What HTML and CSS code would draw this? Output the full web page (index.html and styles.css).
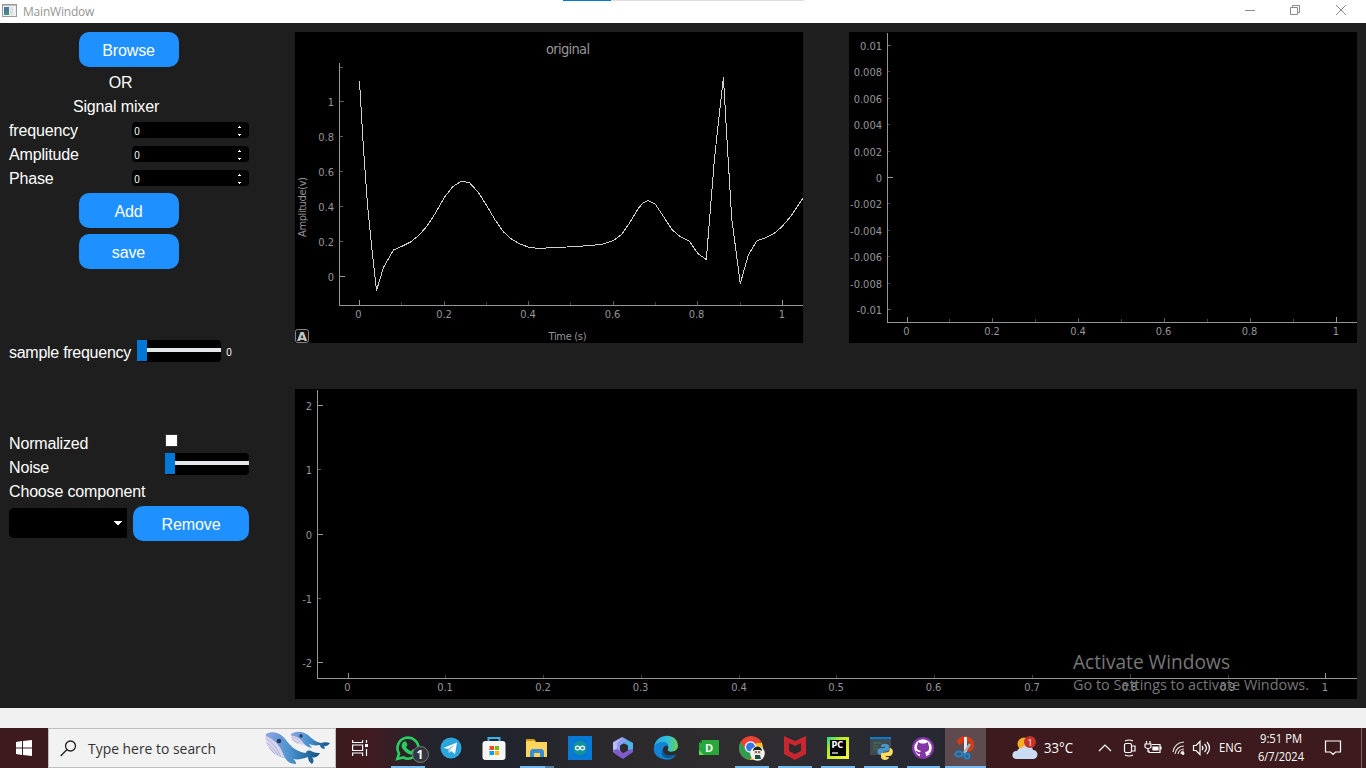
FILE: index.html
```html
<!DOCTYPE html>
<html lang="en">
<head>
<meta charset="utf-8">
<title>MainWindow</title>
<link rel="stylesheet" href="styles.css">
</head>
<body>
<header class="titlebar">
  <svg class="app-icon" width="15" height="13" viewBox="0 0 15 13"><rect x=".5" y=".5" width="14" height="12" fill="#eef0f1" stroke="#989b9e"/><path d="M1 1h13v1H1z" fill="#b9c0c8"/><path d="M2 3h5v8H2z" fill="#3f8f82"/><path d="M2 3h5v3L2 9z" fill="#4c79a0"/><path d="M8 3h3v8H8z" fill="#dedfe0"/></svg>
  <span class="title">MainWindow</span>
  <div class="progress"><i></i></div>
  <svg class="window-buttons" width="104" height="12" viewBox="1244 4 104 12" fill="none" stroke="#8b8b8b"><path d="M1245 10.500h10M1290.500 7.500h7v7h-7zM1292.500 7V5.500h7v7H1298"/><path d="M1336 5l10 10M1346 5l-10 10"/></svg>
</header>

<main class="window">
  <section class="controls">
    <button class="button">Browse</button>
    <div class="label label-or">OR</div>
    <div class="label label-mixer">Signal mixer</div>
    <div class="row"><span class="label">frequency</span><div class="spin"><span class="digit">0</span><svg width="5" height="12" viewBox="0 0 5 12" fill="#fff"><path d="M2 1h1v1h1v1H1V2h1zM1 9h3v1H3v1H2v-1H1z"/></svg></div></div>
    <div class="row"><span class="label">Amplitude</span><div class="spin"><span class="digit">0</span><svg width="5" height="12" viewBox="0 0 5 12" fill="#fff"><path d="M2 1h1v1h1v1H1V2h1zM1 9h3v1H3v1H2v-1H1z"/></svg></div></div>
    <div class="row"><span class="label">Phase</span><div class="spin"><span class="digit">0</span><svg width="5" height="12" viewBox="0 0 5 12" fill="#fff"><path d="M2 1h1v1h1v1H1V2h1zM1 9h3v1H3v1H2v-1H1z"/></svg></div></div>
    <button class="button">Add</button>
    <button class="button">save</button>
    <div class="sample"><span class="label">sample frequency</span><div class="slider"><i></i></div><span class="value digit">0</span></div>
    <div class="row"><span class="label">Normalized</span><i class="check"></i></div>
    <div class="row"><span class="label">Noise</span><div class="slider noise"><i></i></div></div>
    <div class="label">Choose component</div>
    <div class="component"><div class="combo"><svg width="8" height="4" viewBox="0 0 8 4"><path d="M0 0h8v1H7v1H6v1H5v1H3V3H2V2H1V1H0z" fill="#fff"/></svg></div><button class="button remove">Remove</button></div>
  </section>

  <section class="plots">
    <svg class="plot" width="508" height="311" viewBox="295 32 508 311">
      <path class="axis" d="M339.500 63v242.500H803M339.500 276.500h5M359.500 305v-5M782.500 305v-5"/>
      <path class="tick" d="M340 101.500h4M340 136.500h3M340 171.500h3M340 206.500h3M340 241.500h3M340 67.500h3M444.500 305v-4M528.500 305v-4M613.500 305v-4M697.500 305v-4"/>
      <path class="minor" d="M401.500 305v-3M486.500 305v-3M570.500 305v-3M655.500 305v-3M740.500 305v-3"/>
      <polyline class="curve" points="359.500,81 363.300,146 367.500,205 372,250 376.500,290.500 383.500,267.500 393.500,250 401.500,246.500 410,242.300 418.300,236 427.300,225.700 435.300,213.300 444,198 452.300,187 461,181.300 469.300,182.500 478.300,192.300 486.700,205.700 495,219.700 503.300,231.700 511.700,239.300 520,244 528.300,247 537.300,248.400 546,248 566.700,247 583.300,246 595,245 603.300,244 613.300,240.700 621.700,234.300 630,222.300 638.300,208.300 642.500,203.500 647.700,200.500 655.300,204.300 664,217.300 672.300,230 680.700,237 689.300,241 697.700,253.300 706.300,259.700 714.500,158.300 723.400,77 727.300,145 731.700,218.300 740.300,283.700 748.300,255 757,240.700 766,237.700 774.300,233.300 782.300,226.300 791,216 803,198"/>
      <g class="num end"><text x="334" y="106">1</text><text x="334" y="141">0.8</text><text x="334" y="176">0.6</text><text x="334" y="211">0.4</text><text x="334" y="246">0.2</text><text x="334" y="281">0</text></g>
      <g class="num mid"><text x="358.500" y="318">0</text><text x="444" y="318">0.2</text><text x="528" y="318">0.4</text><text x="612.500" y="318">0.6</text><text x="696.500" y="318">0.8</text><text x="782" y="318">1</text><text x="567.500" y="340" textLength="38">Time (s)</text><text transform="translate(306 207) rotate(-90)" textLength="60">Amplitude(v)</text></g>
      <text class="plot-title" x="546" y="54" textLength="44">original</text>
      <rect x="295.500" y="329.500" width="13" height="13" rx="2" fill="#111" stroke="#858585"/><text class="auto" x="302" y="341">A</text>
    </svg>
    <svg class="plot" width="508" height="311" viewBox="849 32 508 311">
      <path class="axis" d="M887.500 33v289.500H1357M888 177.500h5M907.500 322v-5M1336.500 322v-5"/>
      <path class="tick" d="M888 45.500h3M888 309.500h3M992.500 322v-4M1078.500 322v-4M1164.500 322v-4M1250.500 322v-4"/>
      <path class="minor" d="M888 71.500h2M888 98.500h2M888 124.500h2M888 151.500h2M888 203.500h2M888 230.500h2M888 256.500h2M888 283.500h2M949.500 322v-3M1035.500 322v-3M1121.500 322v-3M1207.500 322v-3M1293.500 322v-3"/>
      <g class="num end"><text x="882" y="50">0.01</text><text x="882" y="76">0.008</text><text x="882" y="103">0.006</text><text x="882" y="129">0.004</text><text x="882" y="156">0.002</text><text x="882" y="182">0</text><text x="882" y="208">-0.002</text><text x="882" y="235">-0.004</text><text x="882" y="261">-0.006</text><text x="882" y="288">-0.008</text><text x="882" y="314">-0.01</text></g>
      <g class="num mid"><text x="906.500" y="335">0</text><text x="992" y="335">0.2</text><text x="1078" y="335">0.4</text><text x="1163.500" y="335">0.6</text><text x="1249.500" y="335">0.8</text><text x="1336" y="335">1</text></g>
    </svg>
    <svg class="plot wide" width="1062" height="310" viewBox="295 389 1062 310">
      <path class="axis" d="M317.500 390v288.500H1357M318 405.500h5M318 534.500h5M318 662.500h5M348.500 678v-5M1325.500 678v-5"/>
      <path class="tick" d="M318 469.500h3M318 598.500h3"/>
      <path class="minor" d="M445.500 678v-3M543.500 678v-3M641.500 678v-3M739.500 678v-3M836.500 678v-3M934.500 678v-3M1032.500 678v-3M1130.500 678v-4M1228.500 678v-3"/>
      <g class="num end"><text x="312" y="410">2</text><text x="312" y="474">1</text><text x="312" y="539">0</text><text x="312" y="603">-1</text><text x="312" y="667">-2</text></g>
      <g class="num mid"><text x="347.500" y="691">0</text><text x="445" y="691">0.1</text><text x="543" y="691">0.2</text><text x="640.500" y="691">0.3</text><text x="739" y="691">0.4</text><text x="836" y="691">0.5</text><text x="933.500" y="691">0.6</text><text x="1032" y="691">0.7</text><text x="1129.500" y="691">0.8</text><text x="1227.500" y="691">0.9</text><text x="1325" y="691">1</text></g>
    </svg>
  </section>
</main>
<div class="statusbar"></div>

<footer class="taskbar">
  <div class="start"><svg width="16" height="16" viewBox="0 0 16 16" fill="#fff"><path d="M0 2l6-.9v6.500H0zM7 1l9-1v7.600H7zM0 8.500h6V15l-6-.9zM7 8.500h9V16l-9-1z"/></svg></div>
  <div class="search">
    <svg width="17" height="17" viewBox="0 0 17 17" fill="none" stroke="#222" stroke-width="1.300"><circle cx="10.500" cy="6" r="5"/><path d="M7 9.500L.7 16"/></svg>
    <svg class="search-text" width="132" height="26" viewBox="0 0 132 26"><text x="0" y="19" textLength="128" lengthAdjust="spacingAndGlyphs">Type here to search</text></svg>
    <svg class="whales" width="65" height="34" viewBox="0 0 65 34">
      <defs><linearGradient id="whale"><stop stop-color="#8fa3df"/><stop offset=".45" stop-color="#4a92cd"/><stop offset="1" stop-color="#0e5083"/></linearGradient></defs>
      <path d="M1 3c7-4 15-1 20 6 5 7 11 12 20 13 0-2 2-3 5-2 4 2 6 2 9 2-3 5-6 5-8 4 2 3 2 5 0 7-3-2-4-4-4-7-6 2-10 3-15 2 3 2 3 4 3 5-6 0-9-3-11-6C9 25-1 15 1 3z" fill="url(#whale)"/>
      <path d="M1 5c5 2 9 5 13 10 3 4 4 8 6 12C9 25-1 15 1 5z" fill="#d9d3ed"/><path d="M2 8c5 3 9 8 14 18M2 12c4 3 7 7 11 12M4 17c2 2 4 4 6 6" stroke="#9bacd0" stroke-width=".7" fill="none"/>
      <circle cx="14" cy="10" r="2.300" fill="#263b66"/>
      <path d="M26 3c6-4 13-2 17 1 4 4 8 7 13 8 2-1 5-1 9 0-2 3-4 3-6 3 1 2 1 3 0 3-3-1-4-2-4-4-5 1-8 0-11-1l3 4c-4-1-6-2-8-4-7 1-13-4-13-10z" fill="url(#whale)"/><path d="M26 5c5-1 10 3 13 8-7 1-13-2-13-8z" fill="#d9d3ed"/><path d="M28 6c3 1 6 3 8 6M27 8c2 1 4 3 6 4" stroke="#9bacd0" stroke-width=".6" fill="none"/><circle cx="36" cy="5" r="1.700" fill="#263b66"/>
    </svg>
  </div>
  <div class="taskview"><svg width="17" height="16" viewBox="0 0 17 16" fill="none" stroke="#fff" stroke-width="1.200"><path d="M.6 0v2.500h10V0M.6 16v-3h10v3M.6 5h10v5.500H.6zM14.500 0v3M14.500 9v7"/><path d="M13 4h3v3h-3z" fill="#fff" stroke="none"/></svg></div>
  <nav class="apps">
    <div class="app run"><svg class="whatsapp" width="34" height="30" viewBox="0 0 34 30"><path d="M2.300 25l1.700-5.500A10.500 10.500 0 1 1 8.300 23.500z" fill="none" stroke="#25cf62" stroke-width="2.600"/><path d="M8.500 8c2-2 3 0 4 3L11 13c1 2 3 3.500 5 4.300l1.800-2c2 .8 3.700 1.500 3 3-2 4-7 3-11-1S5.800 10.300 8.500 8z" fill="#25cf62"/><circle cx="25.500" cy="20.500" r="8" fill="#333840" stroke="#777b80"/><text class="badge" x="25" y="24.500">1</text></svg></div>
    <div class="app"><svg width="24" height="24" viewBox="0 0 24 24"><circle cx="12" cy="12" r="10.500" fill="#2ba5de"/><path d="M4.500 12L18 6.500 16 18l-4-3-2 2-.5-4z" fill="#fff"/><path d="M9 13l7-5-5 6-1 3z" fill="#9cc4dc"/></svg></div>
    <div class="app"><svg width="24" height="24" viewBox="0 0 24 24"><path d="M6.500 6V2h11v4" fill="none" stroke="#36b3e9" stroke-width="2"/><rect x=".5" y="5" width="23" height="19" rx="3" fill="#f5f5f5"/><path d="M7.500 10H12v4H7.500z" fill="#ed4b25"/><path d="M12.800 10H17v4h-4.200z" fill="#78b817"/><path d="M7.500 15H12v4H7.500z" fill="#00a2ed"/><path d="M12.800 15H17v4h-4.200z" fill="#fbb605"/></svg></div>
    <div class="app run explorer"><svg width="24" height="24" viewBox="0 0 24 24"><path d="M1 3h8l2 2H1z" fill="#d79900"/><path d="M1 5h9l1 1h11v15H1z" fill="#fdd45c"/><path d="M5 21v-6l2-2h10l2 2v6h-4v-4H9v4z" fill="#388ed6"/></svg></div>
    <div class="app"><svg width="24" height="24" viewBox="0 0 24 24"><path d="M0 0h24v24H0z" fill="#0878d5"/><circle cx="12" cy="12" r="7" fill="#11959b"/><path d="M12 12c-1.500-3-4.500-2-4.500 0s3 3 4.500 0 4.500-2 4.500 0-3 3-4.500 0z" fill="none" stroke="#fff" stroke-width="1.300"/></svg></div>
    <div class="app"><svg width="24" height="24" viewBox="0 0 24 24"><path d="M11 1L2 6v10l5 3 3-3V9l5-3V3z" fill="#8d9cf3"/><path d="M11 1l4 2v3l-5 3 4-1 3 2v6l5-2V7z" fill="#4bb5e7"/><path d="M22 13v3l-10 7-8-5-2-4 4-1 6 4 5-3z" fill="#7f5cce"/><path d="M9 9.500l4-2 4 2v5l-4 2-4-2z" fill="#2e2b2e"/><path d="M2 14V7l9-5-5 5v6z" fill="#c0baf6"/></svg></div>
    <div class="app"><svg width="26" height="26" viewBox="0 0 26 26"><defs><linearGradient id="edge"><stop stop-color="#2aa9dc"/><stop offset=".55" stop-color="#30bddd"/><stop offset="1" stop-color="#67d553"/></linearGradient></defs><path d="M1 13C2-3 25-3 25 11c0 7-12 7-10 3 2-9-10-7-14-1z" fill="url(#edge)"/><path d="M1 12c3-6 14-7 14-1-2-1-5 0-5 4 0 4 5 8 13 5-3 4-8 6-13 4C3 22 0 18 1 12z" fill="#1383d3"/><path d="M10 13c-2 6 5 9 13 6-6 8-18 4-13-6z" fill="#075795"/></svg></div>
    <div class="app"><svg width="20" height="16" viewBox="0 0 20 16"><path d="M3 0h17v15H0V3z" fill="#27a83a"/><path d="M3 0v3H0z" fill="#176e27"/><path d="M0 10l5 5H0z" fill="#69d85b"/><text class="d-letter" x="10" y="12">D</text></svg></div>
    <div class="app run"><svg width="26" height="26" viewBox="0 0 26 26"><circle cx="12" cy="13" r="12" fill="#ea4335"/><path d="M1.600 7A12 12 0 0 0 11 25l6-10H7z" fill="#2f9e50"/><path d="M24 13a12 12 0 0 1-13 12l6-9V8h6z" fill="#fcc31c"/><circle cx="11.500" cy="12" r="5.800" fill="#fff"/><circle cx="11.500" cy="12" r="4.500" fill="#3978df"/><circle cx="18.500" cy="18.500" r="7.300" fill="#f2f2f0"/><path d="M14 16c0-6 9-6 9 0l-2-1h-5z" fill="#162520"/><path d="M15 16h7v3h-7z" fill="#efcbb5"/><path d="M17 16v2M20 16v2" stroke="#222"/><path d="M16 20h5l1 4h-6z" fill="#1e5146"/></svg></div>
    <div class="app run"><svg width="24" height="24" viewBox="0 0 24 24"><path d="M1 0l11 5 11-5v18l-11 6-11-6zM6 7v8l6 3 6-3V7l-6 3z" fill="#c8282d" fill-rule="evenodd"/></svg></div>
    <div class="app run"><svg width="22" height="22" viewBox="0 0 22 22"><defs><linearGradient id="pc" x2="1" y2="1"><stop stop-color="#20d889"/><stop offset=".35" stop-color="#b6ec20"/><stop offset="1" stop-color="#faf34d"/></linearGradient></defs><path d="M0 0h22v22H0z" fill="url(#pc)"/><path d="M3 3h16v16H3z"/><text class="pc-letters" x="4.500" y="11">PC</text><path d="M5 16h6" stroke="#fff" stroke-width="1.200"/></svg></div>
    <div class="app run"><svg width="24" height="24" viewBox="0 0 24 24"><path d="M1 1h21v18H1z" fill="#414850"/><path d="M1 1h21v2H1z" fill="#087bd0"/><path d="M4 7h9M4 10h5M4 13h5" stroke="#3c7c4d"/><path d="M12 10c0-3 8-3 8 0v4c0 2-5 1-6 2l-1 3c-6 1-6-7-1-7h4v-1h-4z" fill="#4795cb"/><path d="M20.500 12c5 0 4 8 0 8H17v1h3c0 4-8 4-8 0v-3c0-2 5-1 7-2 2 0 1.500-3 1.500-4z" fill="#ffdc5b"/></svg></div>
    <div class="app run github"><svg width="24" height="24" viewBox="0 0 24 24"><circle cx="12" cy="12" r="11" fill="#8435a7"/><circle cx="12" cy="12" r="8.700" fill="#fff"/><path d="M7 6l3 1.500h4L17 6l.5 3c2 5-1 7-3.500 7 1 1 1 3 1 5H9v-3c-3 1-3-2-5-3 3-1 2 2 5 1l1-1c-4-1-5-3-3.500-6z" fill="#8435a7"/></svg></div>
    <div class="app run active"><svg width="24" height="24" viewBox="0 0 24 24"><path d="M3 5c3-7 15-6 17 2 1 6-3 9-7 9v-3c4 0 5-5 2-7-4-2-6 0-9 3-2-1-3-2-3-4z" fill="#d83b12"/><path d="M10 1h3v15h-3z" fill="#e4eaf0"/><path d="M16 8l-6 9" stroke="#aab1b6" stroke-width="2.500"/><g fill="none" stroke="#1687d8" stroke-width="2"><ellipse cx="5" cy="18" rx="3.500" ry="2.500"/><circle cx="13" cy="20" r="2.500"/></g></svg></div>
  </nav>
  <div class="tray">
    <svg width="380" height="40" viewBox="986 728 380 40">
      <circle cx="1024" cy="744" r="6.500" fill="#f7ae24"/><path d="M1016 759h17a4.500 4.500 0 0 0 0-9 6 6 0 0 0-11-2 5 5 0 0 0-5 3 4 4 0 0 0-1 8z" fill="#c9dcf4"/><circle cx="1030" cy="742" r="6" fill="#c93226"/><text class="alert" x="1030" y="745.500">1</text>
      <g class="tray-text"><text x="1044" y="753" font-size="14" textLength="29" lengthAdjust="spacingAndGlyphs">33°C</text><text x="1219" y="752" textLength="23" lengthAdjust="spacingAndGlyphs">ENG</text><text x="1260" y="743" textLength="42" lengthAdjust="spacingAndGlyphs">9:51 PM</text><text x="1258" y="761" textLength="46" lengthAdjust="spacingAndGlyphs">6/7/2024</text></g>
      <g fill="none" stroke="#fff" stroke-width="1.200"><path d="M1099 751l6-6 6 6M1325.500 741v11h5l2.500 2.500 2.500-2.500h5v-11z"/><rect x="1124.500" y="743.500" width="7" height="9" rx="1.500"/><path d="M1132 746h3v5h-3M1125 741q4-2 8 0M1125 755q4 2 8 0"/><path d="M1152 744.500h8v8h-11v-2M1161 746.500v3M1146.500 741v3M1150 741v3M1145 744h6v3c-1 2-5 2-6 0zM1148 749v3"/><path d="M1153 747h5v3h-5z" fill="#fff"/><path d="M1193.500 745.500h2.500l4-4v13l-4-4h-2.500zM1202 746q2 2 0 4M1204.500 744q4 4 0 8M1207 742q5 6 0 12"/><path d="M1173 752a11 11 0 0 1 11-10M1175 754a9 9 0 0 1 9-8M1178 754a6 6 0 0 1 6-5M1181 754a3 3 0 0 1 3-3" opacity=".85"/></g><circle cx="1183" cy="753.500" r="1.400" fill="#fff"/><path d="M1361.500 728v40" stroke="#806568"/>
    </svg>
  </div>
</footer>
<svg class="watermark" width="250" height="54" viewBox="1070 646 250 54"><text x="1073" y="669" font-size="20" textLength="157" lengthAdjust="spacingAndGlyphs">Activate Windows</text><text x="1073" y="690" font-size="14.500" textLength="236" lengthAdjust="spacingAndGlyphs">Go to Settings to activate Windows.</text></svg>
</body>
</html>
```
FILE: styles.css
```css
* { box-sizing: border-box; }
body { margin: 0; width: 1366px; height: 768px; overflow: hidden; display: flex; flex-direction: column; background: #1e1e1e; font-family: "Liberation Sans", Arial, sans-serif; }
svg { display: block; flex: none; overflow: visible; }
.titlebar { height: 23px; flex: none; background: #fff; display: flex; position: relative; padding: 4px 18px 0 2px; }
.title { margin: -1px 0 0 6px; font: 12px/17px "Open Sans", sans-serif; color: #959595; letter-spacing: -.2px; }
.window-buttons { margin-left: auto; }
.progress { position: absolute; left: 563px; top: 0; width: 241px; height: 1px; background: #dedede; }
.progress i { display: block; width: 48px; height: 1px; background: #0078d7; }
.window { height: 685px; flex: none; display: flex; padding: 9px; gap: 46px; color: #fff; }
.controls { width: 240px; flex: none; display: flex; flex-direction: column; gap: 6px; }
.button { width: 100px; height: 35px; flex: none; align-self: center; margin: 0; padding: 2px 1px 0 0; border: 0; border-radius: 10px; background: #1e90ff; color: #fff; font: 16px "Liberation Sans", Arial, sans-serif; letter-spacing: -.12px; }
.label { height: 18px; flex: none; font-size: 16px; line-height: 19px; white-space: nowrap; letter-spacing: -.16px; }
.label-or { width: 223px; text-align: center; }
.label-mixer { width: 214px; text-align: center; }
.row { display: flex; height: 18px; flex: none; justify-content: space-between; align-items: center; }
.spin { width: 117px; height: 16px; border-radius: 4px; background: #000; display: flex; justify-content: space-between; align-items: center; padding: 2px 7px 0 2px; }
.digit { font-size: 11px; transform: scaleX(.9); }
.sample { display: flex; height: 22px; flex: none; margin-top: 65px; margin-bottom: 66px; }
.sample .label { width: 128px; line-height: 25px; letter-spacing: -.27px; }
.slider { width: 84px; height: 22px; background: linear-gradient(#e4e7e7, #e4e7e7) 0 8px / 100% 4px no-repeat #000; border-radius: 4px; }
.slider i { display: block; width: 10px; height: 21px; background: #0078d7; }
.noise { align-self: flex-start; margin-top: -5px; }
.value { margin: 5px 0 0 5px; line-height: 15px; }
.check { width: 13px; height: 13px; background: #fff; border: 1px solid #333; margin: -5px 71px 0 0; }
.component { display: flex; justify-content: space-between; align-items: flex-start; }
.combo { width: 118px; height: 30px; margin-top: 2px; background: #000; border-radius: 5px 0 0 5px; display: flex; align-items: center; justify-content: flex-end; padding-right: 5px; }
.button.remove { width: 116px; padding: 2px 0 0; }
.plots { width: 1062px; display: grid; grid-template-columns: 508px 508px; gap: 46px; align-content: start; }
.plot { background: #000; overflow: hidden; }
.wide { grid-column: 1 / -1; }
.axis, .tick, .minor, .curve { fill: none; stroke: #969696; shape-rendering: crispEdges; }
.tick { stroke: #5d5d5d; }
.minor { stroke: #3f3f3f; }
.curve { stroke: #d0d0d0; }
.num { font: 11px "DejaVu Sans Condensed", "DejaVu Sans", sans-serif; font-stretch: condensed; fill: #969696; }
.end { text-anchor: end; }
.mid { text-anchor: middle; }
.plot-title { font: 14.500px "DejaVu Sans Condensed", "DejaVu Sans", sans-serif; font-stretch: condensed; fill: #969696; }
.auto { font: bold 13px "DejaVu Sans", sans-serif; fill: #c5c5c5; text-anchor: middle; }
.statusbar { height: 20px; flex: none; background: #f0f0f0; }
.taskbar { height: 40px; flex: none; display: flex; background: linear-gradient(90deg, #3c1a1d 0, #3c1a1d 335px, #401b21 370px, #24242d 430px, #20242d 500px, #2c292d 610px, #302d30 740px, #262832 940px, #3c1a1d 990px); }
.start { width: 48px; padding: 12px 0 0 16px; }
.search { width: 288px; border: 1px solid #bdbdbd; background: #f2f2f2; display: flex; padding: 0 5px 0 11px; align-items: center; }
.search-text { margin-left: 11px; font: 15px "Open Sans", sans-serif; fill: #333; }
.whales { margin-left: auto; }
.taskview { width: 50px; padding: 12px 0 0 16px; }
.apps { display: flex; width: 600px; }
.app { width: 43px; height: 40px; display: flex; align-items: center; justify-content: center; background: no-repeat 5px 38px / 34px 2px; }
.run { background-image: linear-gradient(#76b9ed, #76b9ed); }
.explorer { background-image: linear-gradient(90deg, #76b9ed 25px, #537fa5 25px); }
.whatsapp { margin: 2px 0 0 9px; }
.github { padding-right: 2px; background-size: 33px 2px; }
.active { width: 41px; background-color: #5d4b50; background-position: 0 38px; background-size: 41px 2px; }
.badge, .alert { font: bold 12px "Open Sans", sans-serif; fill: #fff; text-anchor: middle; }
.alert { font-size: 9px; font-weight: normal; }
.d-letter { font: bold 11px "Open Sans", sans-serif; fill: #fff; text-anchor: middle; }
.pc-letters { font: bold 8px "DejaVu Sans", sans-serif; fill: #fff; }
.tray-text { font: 12px "Open Sans", sans-serif; fill: #fff; }
.watermark { position: absolute; left: 1070px; top: 646px; font-family: "Open Sans", sans-serif; fill: #777; }
```
